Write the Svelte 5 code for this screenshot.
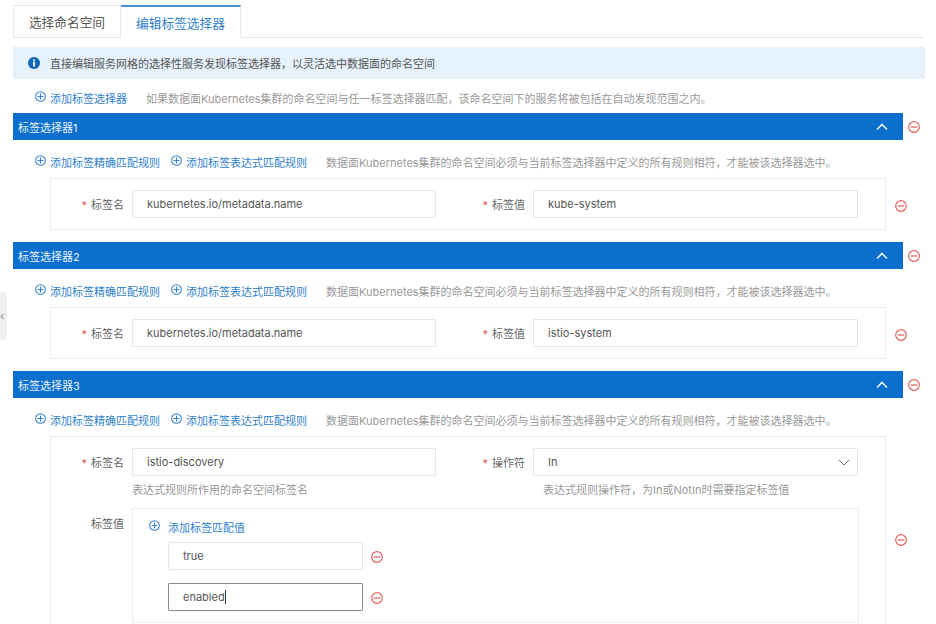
<script>
  const hint = '数据面Kubernetes集群的命名空间必须与当前标签选择器中定义的所有规则相符，才能被该选择器选中。';
</script>

{#snippet plus()}
  <svg class="ic" viewBox="0 0 12 12" width="11" height="11" aria-hidden="true">
    <circle cx="6" cy="6" r="5.3" fill="none" stroke="currentColor" stroke-width="1.1"/>
    <path d="M6 2.8v6.4M2.8 6h6.4" stroke="currentColor" stroke-width="1.1" fill="none"/>
  </svg>
{/snippet}

{#snippet minus()}
  <svg class="minus" viewBox="0 0 12 12" width="12" height="12" aria-hidden="true">
    <circle cx="6" cy="6" r="5.3" fill="none" stroke="currentColor" stroke-width="1.2"/>
    <path d="M2.8 6h6.4" stroke="currentColor" stroke-width="1.3" fill="none"/>
  </svg>
{/snippet}

{#snippet head(title)}
  <div class="section-head">
    <div class="bar">
      <span>{title}</span>
      <svg viewBox="0 0 12 8" width="12" height="8" aria-hidden="true">
        <path d="M1 6.5 6 1.5l5 5" fill="none" stroke="#e8f2fb" stroke-width="1.6"/>
      </svg>
    </div>
    {@render minus()}
  </div>
{/snippet}

{#snippet rules()}
  <div class="links rule-links">
    <a class="link">{@render plus()}<span>添加标签精确匹配规则</span></a>
    <a class="link">{@render plus()}<span>添加标签表达式匹配规则</span></a>
    <span class="note">{hint}</span>
  </div>
{/snippet}

{#snippet simple(value1, value2)}
  <div class="body">
    {@render rules()}
    <div class="box-row">
      <div class="box">
        <div class="row">
          <label class="lab lab1"><i>*</i>标签名</label>
          <div class="input w1">{value1}</div>
          <label class="lab lab2"><i>*</i>标签值</label>
          <div class="input w2">{value2}</div>
        </div>
      </div>
      {@render minus()}
    </div>
  </div>
{/snippet}

<div class="page">
  <div class="handle"><span>‹</span></div>

  <div class="tabs">
    <div class="tab">选择命名空间</div>
    <div class="tab active">编辑标签选择器</div>
  </div>

  <div class="alert">
    <svg viewBox="0 0 13 13" width="12" height="12" aria-hidden="true">
      <circle cx="6.5" cy="6.5" r="6.5" fill="#0f66b9"/>
      <rect x="5.5" y="2.6" width="2" height="2" fill="#fff"/>
      <rect x="5.5" y="5.4" width="2" height="5" fill="#fff"/>
    </svg>
    <span>直接编辑服务网格的选择性服务发现标签选择器，以灵活选中数据面的命名空间</span>
  </div>

  <div class="links add-line">
    <a class="link">{@render plus()}<span>添加标签选择器</span></a>
    <span class="note">如果数据面Kubernetes集群的命名空间与任一标签选择器匹配，该命名空间下的服务将被包括在自动发现范围之内。</span>
  </div>

  {@render head('标签选择器1')}
  {@render simple('kubernetes.io/metadata.name', 'kube-system')}

  {@render head('标签选择器2')}
  {@render simple('kubernetes.io/metadata.name', 'istio-system')}

  {@render head('标签选择器3')}
  <div class="body">
    {@render rules()}
    <div class="box-row">
      <div class="box tall">
        <div class="row">
          <label class="lab lab1"><i>*</i>标签名</label>
          <div class="input w1">istio-discovery</div>
          <label class="lab lab2"><i>*</i>操作符</label>
          <div class="input w2 select">
            <span>In</span>
            <svg viewBox="0 0 12 7" width="12" height="7" aria-hidden="true">
              <path d="M.8.8 6 6l5.2-5.2" fill="none" stroke="#777" stroke-width="1"/>
            </svg>
          </div>
        </div>
        <div class="helps">
          <span class="help h1">表达式规则所作用的命名空间标签名</span>
          <span class="help">表达式规则操作符，为In或NotIn时需要指定标签值</span>
        </div>
        <div class="values-row">
          <span class="lab lab1 plain">标签值</span>
          <div class="values">
            <a class="link add-value">{@render plus()}<span>添加标签匹配值</span></a>
            <div class="value-line">
              <div class="input w3">true</div>
              {@render minus()}
            </div>
            <div class="value-line">
              <div class="input w3 focused"><span class="caret">enabled</span></div>
              {@render minus()}
            </div>
          </div>
        </div>
      </div>
      {@render minus()}
    </div>
  </div>
</div>

<style>
  :global(body) { margin: 0; background: #fff; }
  .page {
    position: relative;
    width: 936px;
    height: 624px;
    overflow: hidden;
    box-sizing: border-box;
    padding: 5px 11px 0 13px;
    font-family: Inter, "Noto Sans CJK SC", sans-serif;
    font-size: 11px;
    color: #555;
    background: #fff;
  }
  .handle {
    position: absolute;
    left: 0;
    top: 292px;
    width: 7px;
    height: 48px;
    background: #efefef;
    border-radius: 0 3px 3px 0;
    color: #888;
    display: flex;
    align-items: center;
    justify-content: flex-start;
    font-size: 11px;
    line-height: 1;
  }
  .tabs {
    display: flex;
    height: 33px;
    box-sizing: border-box;
    border-bottom: 1px solid #e8e8e8;
    margin-bottom: 9px;
  }
  .tab {
    box-sizing: border-box;
    height: 33px;
    width: 108px;
    display: flex;
    align-items: center;
    justify-content: center;
    font-size: 12.7px;
    color: #555;
    border: 1px solid #e8e8e8;
    background: #fff;
  }
  .tab.active {
    width: 120px;
    color: #2f7fcb;
    border-top: 2px solid #4a90d2;
    border-left: 0;
    border-bottom-color: #fff;
  }
  .alert {
    display: flex;
    align-items: center;
    gap: 10px;
    height: 32px;
    padding-left: 15px;
    background: #e5f1fb;
    color: #555;
  }
  .links {
    display: flex;
    align-items: center;
    white-space: nowrap;
  }
  .add-line {
    height: 34px;
    padding: 4px 0 0 22px;
    box-sizing: border-box;
  }
  .link {
    display: inline-flex;
    align-items: center;
    color: #2f7fcb;
    gap: 4px;
  }
  .ic {
    flex: none;
    position: relative;
    top: -2px;
  }
  .note {
    color: #999;
  }
  .add-line .note { margin-left: 19px; }
  .section-head {
    display: flex;
    align-items: center;
    gap: 5px;
    height: 27px;
  }
  .bar {
    width: 890px;
    height: 27px;
    box-sizing: border-box;
    display: flex;
    align-items: center;
    justify-content: space-between;
    padding: 0 15px 0 5px;
    background: #0c6ecd;
    color: #e8f2fb;
  }
  .minus {
    flex: none;
    color: #e4625f;
  }
  .body {
    padding: 12px 0 12px 0;
  }
  .rule-links {
    height: 20px;
    padding-left: 22px;
    margin-bottom: 6px;
    gap: 11px;
  }
  .rule-links .note { margin-left: 8px; }
  .box-row {
    display: flex;
    align-items: center;
    gap: 9px;
    padding-left: 37px;
  }
  .box-row > .minus {
    position: relative;
    top: 2px;
  }
  .box {
    box-sizing: border-box;
    width: 836px;
    height: 52px;
    border: 1px solid #ececec;
    padding-top: 11px;
  }
  .box.tall { height: 204px; }
  .row {
    display: flex;
    align-items: center;
  }
  .lab {
    box-sizing: border-box;
    text-align: right;
    color: #666;
    flex: none;
  }
  .lab i {
    color: #dc5a55;
    font-style: normal;
    margin-right: 4px;
  }
  .lab1 { width: 73px; margin-right: 8px; }
  .lab2 { width: 89px; margin-right: 8px; }
  .input {
    box-sizing: border-box;
    height: 28px;
    display: flex;
    align-items: center;
    padding-left: 14px;
    border: 1px solid #e6e6e6;
    border-radius: 1px;
    background: #fff;
    color: #555;
    flex: none;
  }
  .w1 { width: 304px; }
  .w2 { width: 325px; }
  .w3 { width: 195px; }
  .select {
    justify-content: space-between;
    padding-right: 7px;
  }
  .focused { border-color: #8a8a8a; }
  .caret {
    border-right: 1px solid #333;
    line-height: 14px;
  }
  .helps {
    display: flex;
    padding: 5px 0 0 81px;
    height: 26px;
    box-sizing: border-box;
    color: #999;
  }
  .help.h1 { width: 411px; }
  .values-row {
    display: flex;
    align-items: flex-start;
    margin-top: 6px;
  }
  .values-row .plain {
    padding-top: 9px;
    line-height: 14px;
  }
  .values {
    box-sizing: border-box;
    width: 727px;
    height: 115px;
    border: 1px solid #ececec;
    padding: 8px 0 0 16px;
    flex: none;
  }
  .add-value {
    height: 20px;
    gap: 8px;
  }
  .value-line {
    display: flex;
    align-items: center;
    gap: 9px;
    margin: 5px 0 13px 19px;
  }
  .value-line + .value-line { margin-top: 13px; }
  .value-line .minus { position: relative; top: 1px; left: -1px; }
</style>
